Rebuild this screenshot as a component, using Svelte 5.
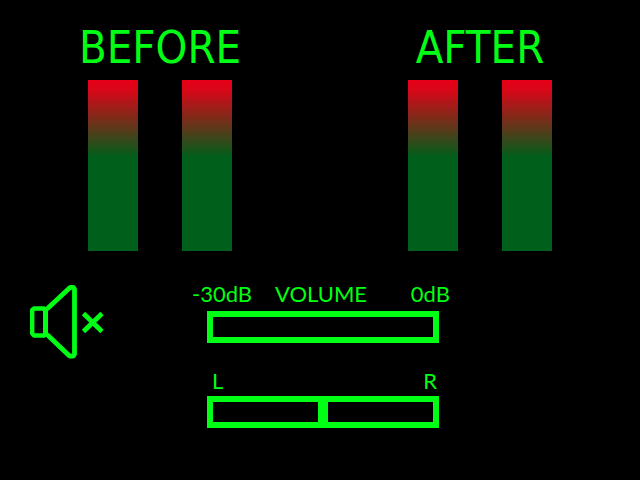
<script>
  const groups = ['BEFORE', 'AFTER'];
  const channels = ['left', 'right'];
  let volume = $state(-30);
  let balance = $state(0);
  let muted = $state(true);
</script>

<main>
  <div class="meters">
    {#each groups as name}
      <section>
        <h2>{name}</h2>
        <div class="bars">
          {#each channels as channel}
            <div class="bar" role="img" aria-label="{name} {channel} level"></div>
          {/each}
        </div>
      </section>
    {/each}
  </div>

  <div class="controls">
    <button class="mute" aria-label="Mute" aria-pressed={muted} onclick={() => (muted = !muted)}>
      <svg viewBox="0 0 74 75" width="74" height="75" fill="none" stroke="currentColor" stroke-linejoin="round">
        <path d="M15 23.500H4L2.200 25V48.500L4 50.500H15" stroke-width="4.400" />
        <path d="M15.500 22v30" stroke-width="5" />
        <path d="M17 24 39.500 3Q41 2 43.500 2.500L44.500 4V69L43.500 71Q41 71.500 39 70.500L17 49.500" stroke-width="4.800" />
        {#if muted}
          <path d="M53.500 28.500 72 46.500M72 28.500 53.500 46.500" stroke-width="4.800" />
        {/if}
      </svg>
    </button>

    <div class="sliders">
      <div class="field">
        <div class="labels wide">
          <span>-30dB</span>
          <label for="volume">VOLUME</label>
          <span class="end">0dB</span>
        </div>
        <input id="volume" class="volume" type="range" min="-30" max="0" bind:value={volume} />
      </div>
      <div class="field">
        <div class="labels sides">
          <span>L</span>
          <span class="end">R</span>
        </div>
        <input class="balance" type="range" min="-50" max="50" aria-label="Balance" bind:value={balance} />
      </div>
    </div>
  </div>
</main>

<style>
  :global(body) {
    margin: 0;
    background: #000;
  }

  main {
    min-height: 100vh;
    box-sizing: border-box;
    padding-top: 24px;
    background: #000;
    color: #00ff14;
    font-family: Lato, sans-serif;
  }

  .meters {
    display: grid;
    grid-template-columns: 1fr 1fr;
  }

  h2 {
    margin: 0 0 8px;
    font-family: "DejaVu Sans Condensed", "DejaVu Sans", sans-serif;
    font-size: 45px;
    font-weight: 400;
    line-height: 48px;
    text-align: center;
  }

  .bars {
    display: flex;
    justify-content: center;
    gap: 44px;
  }

  .bar {
    width: 50px;
    height: 171px;
    background: linear-gradient(#e60019 0, #d80618 10px, #005f1b 77px);
  }

  .controls {
    display: grid;
    grid-template-columns: 1fr 232px 1fr;
    align-items: start;
    padding: 29px 24px 0 30px;
  }

  .mute {
    justify-self: start;
    margin-top: 5px;
    padding: 0;
    border: 0;
    background: none;
    color: inherit;
    cursor: pointer;
  }

  svg {
    display: block;
  }

  .sliders {
    display: flex;
    flex-direction: column;
    gap: 24px;
  }

  .field {
    display: flex;
    flex-direction: column;
  }

  .labels {
    display: grid;
    font-size: 22px;
    line-height: 28px;
  }

  .wide {
    grid-template-columns: 1fr auto 1fr;
    margin: 0 -11px 0 -15px;
    padding-bottom: 3px;
  }

  .sides {
    grid-template-columns: 1fr 1fr;
    padding: 0 2px 1px 5px;
  }

  .end {
    text-align: right;
  }

  input {
    appearance: none;
    box-sizing: border-box;
    width: 100%;
    height: 32px;
    margin: 0;
    border: 6px solid #00ff14;
    border-radius: 0;
    background: transparent;
    cursor: pointer;
  }

  input::-webkit-slider-thumb {
    appearance: none;
    width: 10px;
    height: 20px;
    border: 0;
    border-radius: 0;
    background: #00ff14;
  }

  .volume::-webkit-slider-thumb {
    width: 0;
  }
</style>
